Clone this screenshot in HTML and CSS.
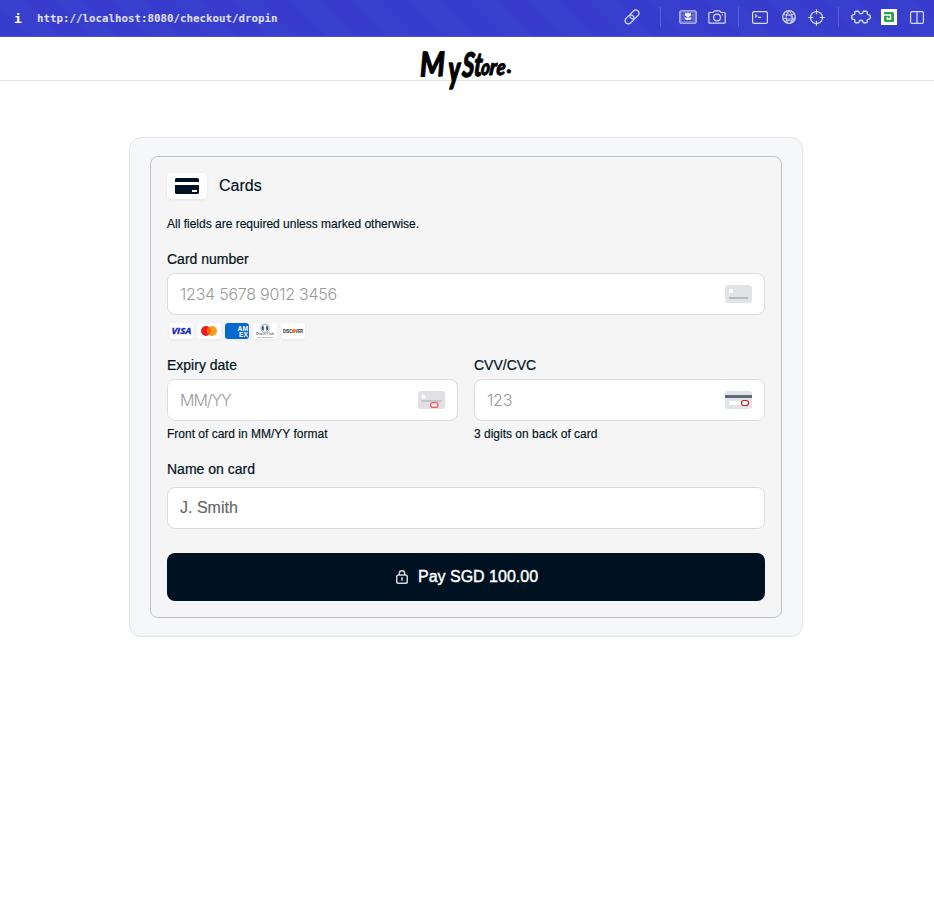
FILE: index.html
```html
<!DOCTYPE html>
<html lang="en">
<head>
<meta charset="utf-8">
<title>Checkout</title>
<link rel="stylesheet" href="styles.css">
</head>
<body>
<div class="toolbar">
  <span class="info">i</span>
  <span class="url">http://localhost:8080/checkout/dropin</span>
  <div class="tools">
    <svg class="link" width="16" height="16" viewBox="0 0 16 16"><g transform="rotate(-45 8 8)"><rect x="-.5" y="4.8" width="10" height="6.4" rx="3.2"/><rect x="6.5" y="4.8" width="10" height="6.4" rx="3.2"/></g></svg>
    <i class="sep"></i>
    <svg class="image" width="18" height="14" viewBox="0 0 18 14"><rect class="soft" x=".8" y=".8" width="16.4" height="12.4" rx="2"/><path class="dots" d="M3 3.5h12M3 7h12M3 10.500h12"/><path class="solid" d="M6 2.500l1.500 1 1.500-1.300 1.500 1.300 1.500-1v3L9.700 7v1l3-1-1.500 3H6.800l-1.500-3 3 1V7L6 5.500z"/></svg>
    <svg class="camera" width="18" height="14" viewBox="0 0 18 14"><path d="M1.700 2.500h3.300L6.300.8h5.400L13 2.500h3.300q.9 0 .9.900v8.800q0 .9-.9.900H1.700q-.9 0-.9-.9V3.400q0-.9.900-.9z"/><circle cx="9" cy="7.500" r="3.400"/><path d="M14 4.700h1"/></svg>
    <i class="sep sep-b"></i>
    <svg class="terminal" width="16" height="13" viewBox="0 0 16 13"><rect x=".6" y=".6" width="14.800" height="11.800" rx="1.500"/><path d="M3 3.500l1.800 1.400L3 6.300M6 6.300h3"/></svg>
    <svg class="globe" width="14" height="14" viewBox="0 0 14 14"><circle cx="7" cy="7" r="6.300"/><path stroke-width=".9" d="M1.500 4.500q5 2 11-.5M.8 8q6 2.500 12.400 0M2.500 11.300q4.500-2 9 0M7 .7Q1.800 7 6 13.300M7 .7q6 6 1.500 12.500M4 1.500q5 4 8.500 9.500"/></svg>
    <svg class="target" width="17" height="17" viewBox="0 0 17 17"><circle cx="8.500" cy="8.500" r="6"/><path d="M8.500 .3v5M8.500 11.700v5M.3 8.500h5M11.700 8.500h5"/></svg>
    <i class="sep sep-c"></i>
    <svg class="puzzle" width="20" height="14" viewBox="0 0 20 14"><path stroke-width="1.400" d="M5 1.200h2.200c.7 0 .8.500.8 1 .2 2 3.800 2 4 0 0-.5.100-1 .8-1H15c1 0 1.200.6 1.200 1.400v1c0 .7.300 1 1 1 2.900 0 2.900 4.800 0 4.800-.7 0-1 .3-1 1v1c0 .8-.2 1.400-1.200 1.400h-2.200c-.7 0-.8-.5-.8-1-.2-2-3.800-2-4 0 0 .5-.1 1-.8 1H5c-1 0-1.200-.6-1.200-1.400v-1c0-.7-.3-1-1-1-2.900 0-2.900-4.800 0-4.800.7 0 1-.3 1-1v-1c0-.8.200-1.400 1.200-1.400z"/></svg>
    <svg class="ext" width="16" height="16" viewBox="0 0 16 16"><path fill="#fff" stroke="none" d="M0 0h16v16H0z"/><path fill="#2ca24c" stroke="none" d="M3 3h8.500Q13 3 13 4.500V13H4.500Q3 13 3 11.500z"/><path stroke="#fff" stroke-width="1.300" d="M3 6h6.500v4H6.300V8"/></svg>
    <svg class="columns" width="14" height="13" viewBox="0 0 14 13"><rect x=".6" y=".6" width="12.800" height="11.800" rx="1.500"/><path d="M7 .6v11.800"/></svg>
  </div>
</div>
<header class="store">
  <svg class="logo" width="94" height="46" viewBox="0 0 94 46" role="img" aria-label="MyStore.">
    <g class="brush">
      <text transform="translate(0 27.500) rotate(-1) skewX(0) scale(.84 1)" font-size="34">M</text>
      <text transform="translate(28.500 34) skewX(0) scale(.95 1.500)" font-size="25">y</text>
      <text transform="translate(41.500 28) skewX(-4) scale(.7 1)" font-size="34">S</text>
      <text transform="translate(53.500 26.500) skewX(-4) scale(.75 1.100)" font-size="30">t</text>
      <text transform="translate(60.500 26) skewX(-6) scale(.76 1)" font-size="22">o</text>
      <text transform="translate(69 26) skewX(-6) scale(.85 1)" font-size="23">r</text>
      <text transform="translate(76 25.500) skewX(-6) scale(.82 1)" font-size="22">e</text>
      <text transform="translate(87 24)" font-size="20">.</text>
    </g>
  </svg>
</header>
<main class="panel">
  <form class="method">
    <div class="head">
      <span class="method-icon"><svg width="24" height="16" viewBox="0 0 24 16"><path fill="#001222" d="M0 4V1.500Q0 0 1.500 0h21Q24 0 24 1.500V4zM0 7h24v7.500q0 1.500-1.500 1.500h-21Q0 16 0 14.500z"/><path fill="#fff" d="M17 12h5v2h-5z"/></svg></span>
      <span class="title">Cards</span>
    </div>
    <p class="note">All fields are required unless marked otherwise.</p>
    <div class="label number-label">Card number</div>
    <div class="field"><span class="ph">1234 5678 9012 3456</span>
      <svg width="27" height="18" viewBox="0 0 27 18"><rect width="27" height="18" rx="3" fill="#e0e4e7"/><rect x="4" y="4" width="4" height="4" rx=".6" fill="#fff"/><path fill="#b2bac3" d="M4 12h19v2H4z"/></svg>
    </div>
    <div class="brands">
      <span><svg width="24" height="16" viewBox="0 0 24 16"><text class="visa" x="2.400" y="11.300" textLength="20" lengthAdjust="spacingAndGlyphs">VISA</text></svg></span>
      <span><svg width="24" height="16" viewBox="0 0 24 16"><circle cx="9" cy="8" r="5" fill="#eb1c26"/><circle cx="15" cy="8" r="5" fill="#f99f1b"/><path fill="#ff5f00" d="M12 4a5 5 0 0 1 0 8 5 5 0 0 1 0-8z"/></svg></span>
      <span><svg width="24" height="16" viewBox="0 0 24 16"><path fill="#0768cd" d="M0 0h24v16H0z"/><text class="amex" x="12.500" y="7.600" textLength="10.500" lengthAdjust="spacingAndGlyphs">AM</text><text class="amex" x="14" y="14.300" textLength="9" lengthAdjust="spacingAndGlyphs">EX</text></svg></span>
      <span><svg width="24" height="16" viewBox="0 0 24 16"><circle cx="12" cy="5.300" r="4.100" fill="#fff" stroke="#66839e" stroke-width=".7"/><path d="M10.700 2.500a3 3 0 0 0 0 5.600zM13.300 2.500a3 3 0 0 1 0 5.600z" fill="#254a72"/><text class="diners" x="3" y="12.300" textLength="18" lengthAdjust="spacingAndGlyphs">Diners Club</text><text class="diners tiny" x="4" y="15.200" textLength="16" lengthAdjust="spacingAndGlyphs">International</text></svg></span>
      <span><svg width="24" height="16" viewBox="0 0 24 16"><text class="disc" x="2" y="9.800" textLength="9" lengthAdjust="spacingAndGlyphs">DISC</text><circle cx="12.800" cy="8" r="2" fill="#f47216"/><text class="disc" x="14.500" y="9.800" textLength="7.500" lengthAdjust="spacingAndGlyphs">VER</text></svg></span>
    </div>
    <div class="pair">
      <div>
        <div class="label exp">Expiry date</div>
        <div class="field"><span class="ph mm">MM/YY</span>
          <svg width="27" height="18" viewBox="0 0 27 18"><rect width="27" height="18" rx="3" fill="#e0e0e5"/><rect x="3.500" y="3.500" width="4" height="4" rx="1" fill="#fff"/><path stroke="#c4c4ca" stroke-width="2" stroke-linecap="round" d="M4 10h19"/><rect x="12.600" y="11.500" width="7.400" height="5" rx="2.500" fill="#e0e0e5" stroke="#ff5050" stroke-width="1.200"/></svg>
        </div>
        <div class="help">Front of card in MM/YY format</div>
      </div>
      <div>
        <div class="label cvv">CVV/CVC</div>
        <div class="field"><span class="ph cv">123</span>
          <svg width="27" height="18" viewBox="0 0 27 18"><rect width="27" height="18" rx="3" fill="#e0e4e7"/><path fill="#5e6878" d="M0 4h27v3H0z"/><rect x="4" y="10" width="16" height="4" rx="1" fill="#fff"/><rect x="16.500" y="9.500" width="7" height="5" rx="2.500" fill="#fff" stroke="#c12424" stroke-width="1.200"/></svg>
        </div>
        <div class="help">3 digits on back of card</div>
      </div>
    </div>
    <div class="label name-label">Name on card</div>
    <div class="field"><span class="smith">J. Smith</span></div>
    <button class="pay" type="button"><svg width="12" height="14" viewBox="0 0 12 14"><path fill="none" stroke="#d3d7dc" stroke-width="1.500" d="M3.300 5V3.500a2.700 2.700 0 0 1 5.400 0V5M2.500 5h7q1.800 0 1.800 1.800v4.700q0 1.800-1.800 1.800h-7Q.7 13.300.7 11.500V6.800Q.7 5 2.500 5zM6 7.300v3.400"/></svg><span>Pay SGD 100.00</span></button>
  </form>
</main>
</body>
</html>
```
FILE: styles.css
```css
* { box-sizing: border-box; }
body { margin: 0; background: #fff; color: #001222; font-family: "Liberation Sans", Arial, sans-serif; }
svg { display: block; flex: none; }

.toolbar {
  height: 37px; display: flex; align-items: center; padding: 0 10px 2px 14px; color: #e0e1fb;
  background: repeating-linear-gradient(45deg, #373ccc 0 21px, #393fcd 21px 42px);
  border-bottom: 1px solid #4c50d5;
  font: bold 11px/14px "DejaVu Sans Mono", monospace;
}
.info { width: 23px; padding-top: 3px; font-size: 13px; color: #fff; }
.url { padding-top: 4px; font-size: 10.8px; white-space: nowrap; }
.tools { display: flex; align-items: center; margin-left: auto; }
.tools svg { fill: none; stroke: #d9dbfa; stroke-width: 1.2; }
.sep { width: 1px; height: 20px; background: #5a5ede; margin: 0 18px 0 20px; }
.sep-b { margin: 0 13px 0 12px; }
.sep-c { margin: 0 12px 0 13px; }
.camera { margin-left: 11px; }
.globe { margin-left: 14px; }
.target { margin-left: 12px; }
.ext { margin-left: 10px; }
.columns { margin-left: 13px; }
.tools .soft { stroke: #a6aaf0; stroke-width: 1.6; fill: #6267da; }
.tools .dots { stroke: #3339bd; stroke-dasharray: 1.5 1.5; }
.tools .solid { fill: #f0f0ff; stroke: none; }

.store { height: 44px; border-bottom: 1px solid #e3e4e6; display: flex; justify-content: center; align-items: flex-start; padding-top: 12px; }
.logo { overflow: visible; }
.brush { fill: #000; stroke: #000; stroke-width: 1; stroke-linejoin: round; font-family: Lato, sans-serif; font-weight: 900; font-style: italic; }

.panel { width: 674px; height: 500px; margin: 56px 0 0 129px; padding: 18px 20px; border: 1px solid #e2e5e9; border-radius: 12px; background: #f5f7f9; }
.method { height: 462px; padding: 16px; border: 1px solid #bfc3c9; border-radius: 8px; background: #f5f5f5; }
.head { display: flex; align-items: center; height: 26px; gap: 12px; }
.method-icon { width: 40px; height: 26px; display: grid; place-items: center; background: #fff; border-radius: 4px; box-shadow: 0 1px 3px #00122214; }
.title { font-size: 16px; line-height: 24px; -webkit-text-stroke: .15px #001222; }
.note { margin: 16px 0 17px; font-size: 12px; line-height: 18px; -webkit-text-stroke: .15px #001222; }
.label { font-size: 14px; line-height: 18px; height: 18px; margin-bottom: 5px; white-space: nowrap; -webkit-text-stroke: .2px #001222; }
.field { height: 42px; display: flex; align-items: center; justify-content: space-between; padding: 0 12px; border: 1px solid #d9dbe0; border-radius: 8px; background: #fff; }
.ph { font: 300 16px/24px Inter, sans-serif; letter-spacing: -.24px; color: #999; }
.mm { letter-spacing: -1px; }
.smith { font-size: 16px; color: #666; -webkit-text-stroke: .15px #666; }
.brands { display: flex; gap: 4px; margin: 8px 0 17px 2px; }
.brands span { width: 24px; height: 16px; border-radius: 3px; overflow: hidden; background: #fff; box-shadow: 0 1px 3px #0012220f; }
.visa { font: italic bold 9px "Open Sans", sans-serif; fill: #1726bd; stroke: #1726bd; stroke-width: .3; }
.amex { font: bold 6.5px "Liberation Sans", sans-serif; fill: #fff; }
.diners { font: 4.5px "Liberation Serif", serif; fill: #333; }
.tiny { font-size: 2.5px; }
.disc { font: bold 5px "Liberation Sans", sans-serif; fill: #222; }
.pair { display: grid; grid-template-columns: 1fr 1fr; gap: 16px; }
.help { margin: 4px 0 17px; font-size: 12px; line-height: 18px; white-space: nowrap; -webkit-text-stroke: .15px #001222; }
.name-label { margin-bottom: 9px; }
.pay { width: 100%; height: 48px; margin-top: 24px; border: 0; border-radius: 8px; background: #001222; color: #fff; display: flex; align-items: center; justify-content: center; gap: 10px; padding: 0 0 0 2px; font: 16px "Liberation Sans", sans-serif; -webkit-text-stroke: .4px #fff; }
```
